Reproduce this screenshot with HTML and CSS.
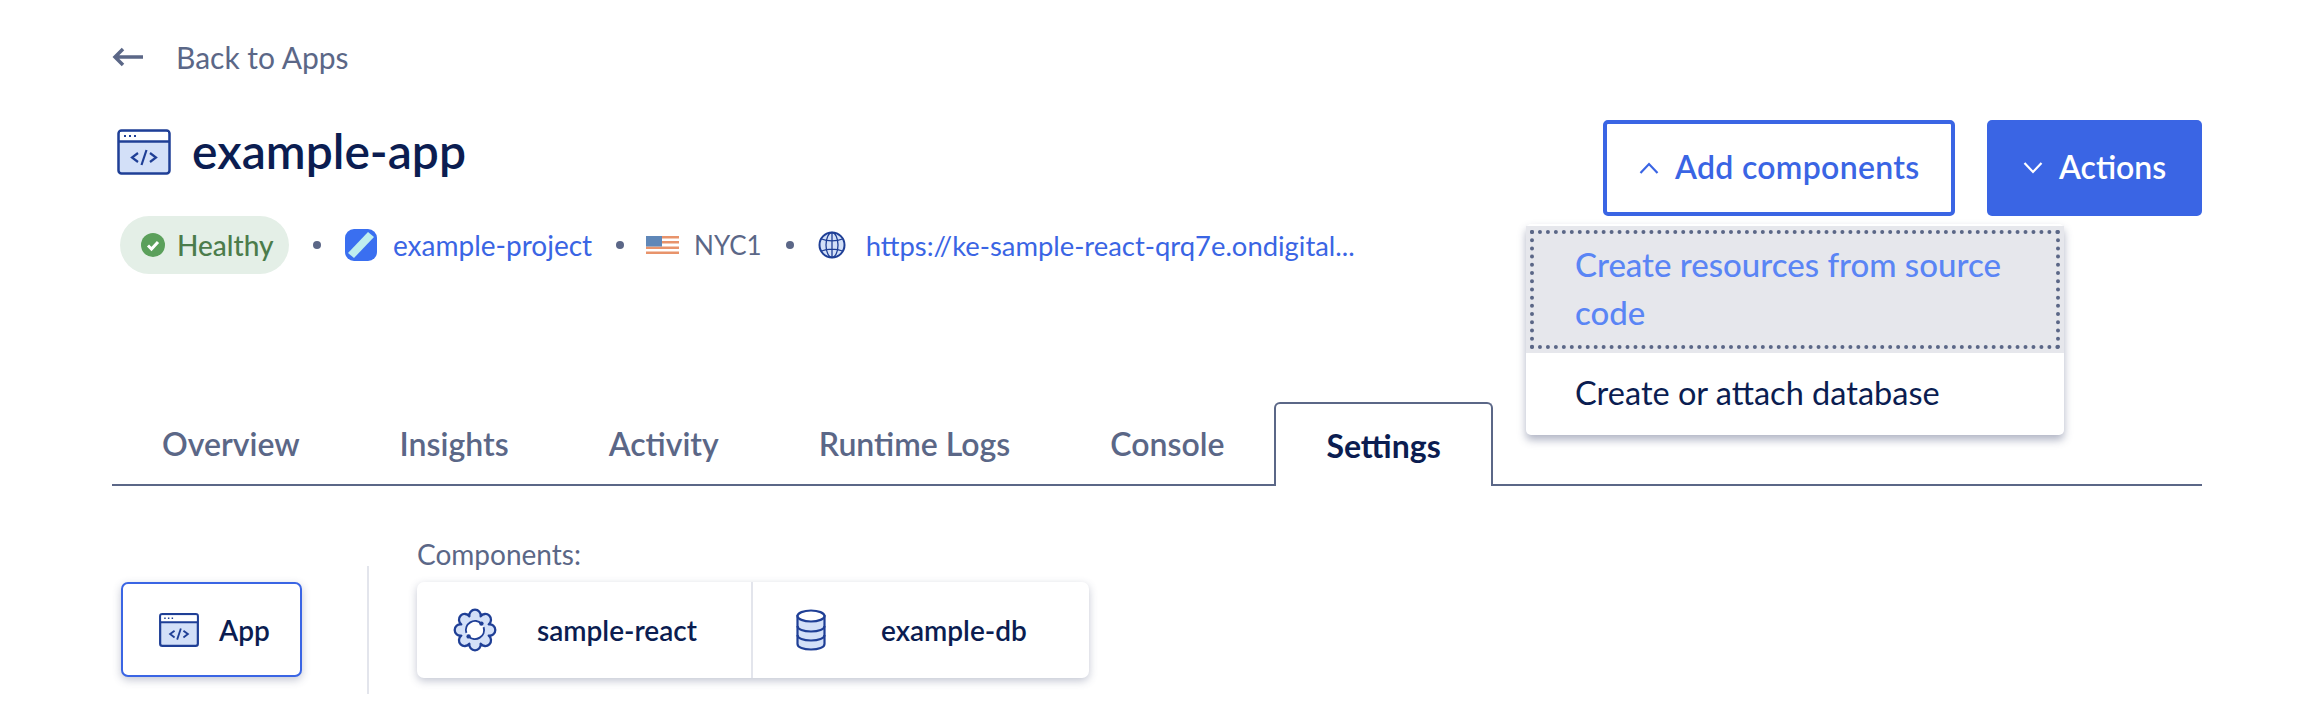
FILE: index.html
```html
<!DOCTYPE html>
<html lang="en">
<head>
  <meta charset="UTF-8">
  <meta name="viewport" content="width=device-width, initial-scale=1.0">
  <title>example-app</title>
  <link rel="stylesheet" href="styles.css">
</head>
<body>
  <div class="page">
    <a class="back-link">
      <svg class="back-arrow" viewBox="0 0 32 20"><path d="M31 10H3M11 2l-8 8 8 8"/></svg>
      <span>Back to Apps</span>
    </a>

    <div class="header">
      <div class="header-left">
        <div class="title-row">
          <svg class="app-icon" viewBox="0 0 54 46">
            <rect x="1.5" y="1.5" width="51" height="43" rx="3" fill="#d3e0f8" stroke="#1f3f96" stroke-width="2.5"/>
            <path d="M3 3h48v9H3z" fill="#fff"/>
            <path d="M2 12.500h50" stroke="#1f3f96" stroke-width="2.500"/>
            <path d="M7 7h2M12 7h2M17 7h2" stroke="#1f3f96" stroke-width="2"/>
            <path d="M21 24l-6 4.500 6 4.500M33 24l6 4.500-6 4.500M29.500 21l-5 15" fill="none" stroke="#1f3f96" stroke-width="2.200"/>
          </svg>
          <h1>example-app</h1>
        </div>
        <div class="meta-row">
          <span class="status-pill">
            <svg class="check-icon" viewBox="0 0 24 24"><circle cx="12" cy="12" r="12" fill="#5ba05b"/><path d="M7 12.500l3.500 3.500L17 9" fill="none" stroke="#fff" stroke-width="3"/></svg>
            Healthy
          </span>
          <i class="dot"></i>
          <svg class="project-icon" viewBox="0 0 32 32">
            <rect width="32" height="32" rx="9" fill="#3a6ff0"/>
            <path d="M23 3l6 5L9 29l-6-5z" fill="#bfeeee"/>
          </svg>
          <a class="meta-link project-link">example-project</a>
          <i class="dot"></i>
          <svg class="flag-icon" viewBox="0 0 33 18">
            <rect width="33" height="18" fill="#fff"/>
            <path d="M0 0h33v2.500H0zM0 5h33v2.500H0zM0 10.500h33V13H0zM0 15.500h33V18H0z" fill="#e8936b"/>
            <rect width="16" height="10.500" fill="#5f87b8"/>
          </svg>
          <span class="region">NYC1</span>
          <i class="dot"></i>
          <svg class="globe-icon" viewBox="0 0 28 28">
            <circle cx="14" cy="14" r="12.500" fill="#d3e0f8" stroke="#1f3f96" stroke-width="2"/>
            <ellipse cx="14" cy="14" rx="6" ry="12.500" fill="none" stroke="#1f3f96" stroke-width="1.300"/>
            <path d="M14 1.500v25M3.500 8c6 2.500 15 2.500 21 0M3.500 20c6-2.500 15-2.500 21 0" fill="none" stroke="#1f3f96" stroke-width="1.300"/>
          </svg>
          <a class="meta-link url-link">https://ke-sample-react-qrq7e.ondigital...</a>
        </div>
      </div>

      <div class="header-actions">
        <div class="add-wrap">
          <button class="btn btn-outline">
            <svg class="chevron" viewBox="0 0 20 12"><path d="M1.500 11L10 2l8.500 9"/></svg>
            <span class="btn-label">Add components</span>
          </button>
          <div class="menu">
            <a class="menu-item active">Create resources from source code</a>
            <a class="menu-item">Create or attach database</a>
          </div>
        </div>
        <button class="btn btn-primary">
          <svg class="chevron" viewBox="0 0 20 12"><path d="M1.500 1l8.500 9 8.500-9"/></svg>
          <span class="btn-label">Actions</span>
        </button>
      </div>
    </div>

    <div class="tabs">
      <a class="tab">Overview</a>
      <a class="tab">Insights</a>
      <a class="tab">Activity</a>
      <a class="tab">Runtime Logs</a>
      <a class="tab">Console</a>
      <a class="tab active">Settings</a>
    </div>

    <div class="settings">
      <div class="card app-card">
        <svg class="app-icon small" viewBox="0 0 54 46">
          <rect x="1.500" y="1.500" width="51" height="43" rx="3" fill="#d3e0f8" stroke="#1f3f96" stroke-width="3"/>
          <path d="M3 3h48v9H3z" fill="#fff"/>
          <path d="M2 12.500h50" stroke="#1f3f96" stroke-width="3"/>
          <path d="M7 7h2M12 7h2M17 7h2" stroke="#1f3f96" stroke-width="2"/>
          <path d="M21 24l-6 4.500 6 4.500M33 24l6 4.500-6 4.500M29.500 21l-5 15" fill="none" stroke="#1f3f96" stroke-width="2.500"/>
        </svg>
        <span>App</span>
      </div>
      <div class="divider"></div>
      <div class="components">
        <div class="components-label">Components:</div>
        <div class="card component-list">
          <div class="component first">
            <svg class="gear-icon" viewBox="-1 -1 46 46">
              <path d="M16.070 7.680A6 6 0 1 1 27.930 7.680A6 6 0 1 1 36.320 16.070A6 6 0 1 1 36.320 27.930A6 6 0 1 1 27.930 36.320A6 6 0 1 1 16.070 36.320A6 6 0 1 1 7.680 27.930A6 6 0 1 1 7.680 16.070A6 6 0 1 1 16.070 7.680Z" fill="#d3e0f8" stroke="#1f3f96" stroke-width="2.400" stroke-linejoin="round"/>
              <circle cx="22" cy="22" r="9.500" fill="#fff"/>
              <path d="M28.700 15.300A9.500 9.500 0 0 0 13 25M15.300 28.700A9.500 9.500 0 0 0 31 19" fill="none" stroke="#1f3f96" stroke-width="2"/>
              <circle cx="28.700" cy="15.300" r="2.300" fill="#1f3f96"/>
              <circle cx="15.300" cy="28.700" r="2.300" fill="#1f3f96"/>
            </svg>
            <span>sample-react</span>
          </div>
          <div class="component second">
            <svg class="db-icon" viewBox="0 0 30 42">
              <path d="M1.500 7v28c0 3.500 6 5.500 13.500 5.500s13.500-2 13.500-5.500V7z" fill="#d3e0f8" stroke="#1f3f96" stroke-width="2.200"/>
              <ellipse cx="15" cy="7" rx="13.500" ry="5.500" fill="#fff" stroke="#1f3f96" stroke-width="2.200"/>
              <path d="M1.500 17c0 3.500 6 5.500 13.500 5.500s13.500-2 13.500-5.500M1.500 26c0 3.500 6 5.500 13.500 5.500s13.500-2 13.500-5.500" fill="none" stroke="#1f3f96" stroke-width="2.200"/>
            </svg>
            <span>example-db</span>
          </div>
        </div>
      </div>
    </div>
  </div>
</body>
</html>
```

FILE: styles.css
```css
body {
  margin: 0;
  background: #fff;
  color: #0b1d51;
  font-family: 'Lato', 'Liberation Sans', sans-serif;
  overflow: hidden;
}
.page {
  padding: 40px 98px 0 112px;
}
.back-link {
  display: flex;
  align-items: center;
  height: 34px;
  margin-bottom: 46px;
  font-size: 30px;
  color: #5b6787;
}
.back-arrow {
  width: 32px;
  height: 20px;
  margin-right: 32px;
  fill: none;
  stroke: #5b6787;
  stroke-width: 3.5;
}
.header {
  display: flex;
  justify-content: space-between;
  align-items: flex-start;
}
.title-row {
  display: flex;
  align-items: center;
  height: 64px;
  padding-left: 5px;
}
.app-icon {
  width: 54px;
  height: 46px;
  margin-right: 21px;
}
.app-icon.small {
  width: 40px;
  height: 34px;
  margin-right: 20px;
}
h1 {
  margin: 0 0 4px;
  font-size: 48px;
  font-weight: 600;
}
.meta-row {
  display: flex;
  align-items: center;
  height: 58px;
  margin-top: 32px;
  padding-left: 8px;
  font-size: 28px;
}
.status-pill {
  display: flex;
  align-items: center;
  box-sizing: border-box;
  width: 169px;
  height: 58px;
  padding-left: 21px;
  border-radius: 29px;
  background: #e4efe7;
  color: #4b7c4b;
  font-weight: 500;
}
.check-icon {
  width: 24px;
  height: 24px;
  margin-right: 12px;
}
.dot {
  width: 8px;
  height: 8px;
  border-radius: 50%;
  background: #5b6787;
  margin: 0 24px;
}
.project-icon {
  width: 32px;
  height: 32px;
  margin-right: 16px;
}
.meta-link {
  color: #3a65e4;
}
.url-link {
  font-size: 27.4px;
}
.flag-icon {
  width: 33px;
  height: 18px;
  margin: 0 15px 0 -2px;
}
.region {
  font-size: 26px;
  color: #5b6787;
}
.globe-icon {
  width: 28px;
  height: 28px;
  margin-right: 20px;
}
.header-actions {
  display: flex;
  gap: 32px;
}
.add-wrap {
  position: relative;
}
.btn {
  display: flex;
  align-items: center;
  height: 96px;
  box-sizing: border-box;
  border-radius: 5px;
  font-family: inherit;
  font-size: 32px;
  font-weight: 600;
}
.btn-label {
  margin-bottom: 4px;
}
.btn-outline {
  width: 352px;
  padding: 0 0 0 32px;
  border: 4px solid #3a65e4;
  background: #fff;
  color: #3a65e4;
  letter-spacing: 0.3px;
}
.btn-primary {
  width: 215px;
  padding: 0 0 0 36px;
  border: none;
  background: #3a65e4;
  color: #fff;
}
.chevron {
  width: 20px;
  height: 12px;
  margin-right: 16px;
  fill: none;
  stroke: currentColor;
  stroke-width: 2.2;
}
.menu {
  position: absolute;
  top: 104px;
  left: -77px;
  width: 538px;
  padding-top: 2px;
  background: #fff;
  border-radius: 5px;
  box-shadow: 0 5px 9px rgba(60, 70, 110, 0.4);
  font-size: 32.5px;
  line-height: 48px;
}
.menu-item {
  display: block;
  padding: 16px 49px 18px 49px;
}
.menu-item.active {
  padding: 14px 49px 17px 49px;
  background: #e6e7ec;
  color: #5a85f5;
  font-size: 33px;
  font-weight: 500;
  outline: 4px dotted #5b6787;
  outline-offset: -8px;
}
.tabs {
  display: flex;
  margin-top: 128px;
  border-bottom: 2px solid #5b6787;
}
.tab {
  display: flex;
  align-items: center;
  height: 82px;
  padding: 0 50px;
  font-size: 32px;
  font-weight: 600;
  color: #5b6787;
}
.tab.active {
  box-sizing: border-box;
  height: 84px;
  margin-bottom: -2px;
  border: 2px solid #5b6787;
  border-bottom: none;
  border-radius: 6px 6px 0 0;
  background: #fff;
  color: #0b1d51;
  font-weight: 700;
}
.settings {
  display: flex;
  align-items: flex-start;
  padding-top: 53px;
}
.card {
  background: #fff;
  border-radius: 7px;
  box-shadow: 0 3px 8px rgba(60, 70, 110, 0.3);
}
.app-card {
  display: flex;
  align-items: center;
  box-sizing: border-box;
  width: 181px;
  height: 95px;
  margin: 43px 0 0 9px;
  padding-left: 36px;
  border: 2px solid #3a65e4;
  font-size: 28px;
  font-weight: 600;
}
.divider {
  width: 2px;
  height: 128px;
  margin: 27px 48px 0 65px;
  background: #e3e5ec;
}
.components-label {
  height: 30px;
  margin-bottom: 13px;
  font-size: 28px;
  line-height: 30px;
  color: #5b6787;
}
.component-list {
  display: flex;
  width: 672px;
  height: 96px;
}
.component {
  display: flex;
  align-items: center;
  box-sizing: border-box;
  font-size: 28px;
  font-weight: 600;
}
.component.first {
  width: 336px;
  padding-left: 36px;
  border-right: 2px solid #e3e5ec;
}
.component.second {
  padding-left: 43px;
}
.gear-icon {
  width: 44px;
  height: 44px;
  margin-right: 40px;
}
.db-icon {
  width: 30px;
  height: 42px;
  margin-right: 55px;
}
```
